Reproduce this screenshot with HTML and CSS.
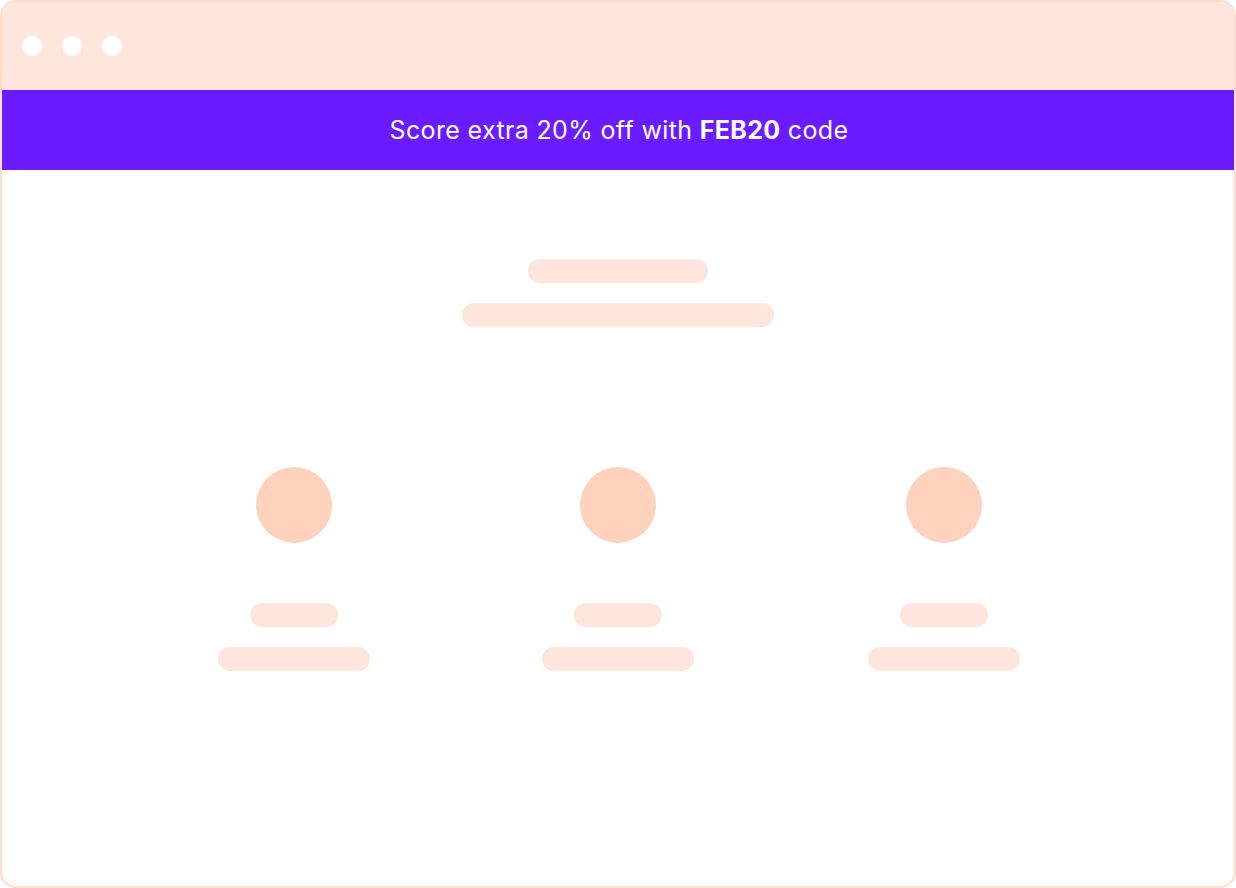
FILE: index.html
```html
<!DOCTYPE html>
<html>
<head>
<meta charset="utf-8">
<link rel="stylesheet" href="styles.css">
</head>
<body>
<div class="frame">
  <div class="chrome">
    <span class="dot"></span><span class="dot"></span><span class="dot"></span>
  </div>
  <div class="banner"><span class="promo">Score extra 20% off with <b>FEB20</b> code</span></div>
  <div class="content">
    <div class="hero">
      <div class="bar w180"></div>
      <div class="bar w312"></div>
    </div>
    <div class="cols">
      <div class="col"><div class="avatar"></div><div class="bar w88"></div><div class="bar w152"></div></div>
      <div class="col"><div class="avatar"></div><div class="bar w88"></div><div class="bar w152"></div></div>
      <div class="col"><div class="avatar"></div><div class="bar w88"></div><div class="bar w152"></div></div>
    </div>
  </div>
</div>
</body>
</html>
```

FILE: styles.css
```css
html, body { margin: 0; padding: 0; background: #fff; }
body { font-family: "Inter", "Lato", sans-serif; }
.frame {
  box-sizing: border-box;
  width: 1236px;
  height: 888px;
  border: 2px solid #ffddcc;
  border-radius: 16px;
  overflow: hidden;
  background: #fff;
  display: flex;
  flex-direction: column;
}
.chrome {
  height: 88px;
  background: #ffe6dc;
  display: flex;
  align-items: center;
  gap: 20px;
  padding-left: 20px;
  flex-shrink: 0;
}
.dot { width: 20px; height: 20px; border-radius: 50%; background: #fff; }
.banner {
  height: 80px;
  background: #6a1bff;
  color: #fff;
  display: flex;
  align-items: center;
  justify-content: center;
  flex-shrink: 0;
}
.promo { font-size: 25px; font-weight: 400; letter-spacing: 0.35px; padding-left: 2px; }
.promo b { font-weight: 700; }
.content { display: flex; flex-direction: column; align-items: center; padding-top: 89px; }
.hero { display: flex; flex-direction: column; align-items: center; gap: 20px; }
.bar { height: 24px; border-radius: 12px; background: #ffe6dc; }
.w180 { width: 180px; }
.w312 { width: 312px; }
.w88 { width: 88px; }
.w152 { width: 152px; }
.cols { display: flex; margin-top: 140px; padding-left: 2px; }
.col { width: 152px; display: flex; flex-direction: column; align-items: center; }
.col:nth-child(1) { margin-right: 172px; }
.col:nth-child(2) { margin-right: 174px; }
.avatar { width: 76px; height: 76px; border-radius: 50%; background: #ffd2bd; margin-bottom: 60px; }
.col .w88 { margin-bottom: 20px; }
```
